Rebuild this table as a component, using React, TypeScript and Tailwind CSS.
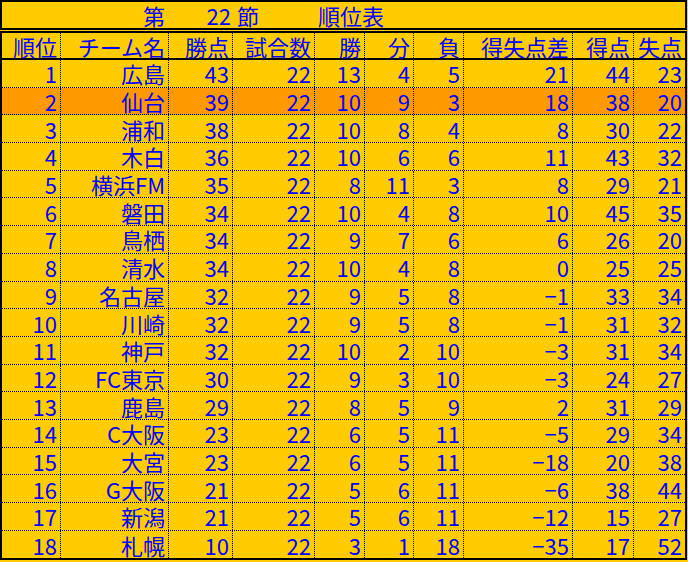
import React from "react";

const W = [
  "w-[59px]",
  "w-[108px]",
  "w-[64px]",
  "w-[82px]",
  "w-[50px]",
  "w-[49px]",
  "w-[50px]",
  "w-[109px]",
  "w-[61px]",
  "w-[51px]",
];

const header = ["順位", "チーム名", "勝点", "試合数", "勝", "分", "負", "得失点差", "得点", "失点"];

const rows: (string | number)[][] = [
  [1, "広島", 43, 22, 13, 4, 5, "21", 44, 23],
  [2, "仙台", 39, 22, 10, 9, 3, "18", 38, 20],
  [3, "浦和", 38, 22, 10, 8, 4, "8", 30, 22],
  [4, "木白", 36, 22, 10, 6, 6, "11", 43, 32],
  [5, "横浜FM", 35, 22, 8, 11, 3, "8", 29, 21],
  [6, "磐田", 34, 22, 10, 4, 8, "10", 45, 35],
  [7, "鳥栖", 34, 22, 9, 7, 6, "6", 26, 20],
  [8, "清水", 34, 22, 10, 4, 8, "0", 25, 25],
  [9, "名古屋", 32, 22, 9, 5, 8, "−1", 33, 34],
  [10, "川崎", 32, 22, 9, 5, 8, "−1", 31, 32],
  [11, "神戸", 32, 22, 10, 2, 10, "−3", 31, 34],
  [12, "FC東京", 30, 22, 9, 3, 10, "−3", 24, 27],
  [13, "鹿島", 29, 22, 8, 5, 9, "2", 31, 29],
  [14, "C大阪", 23, 22, 6, 5, 11, "−5", 29, 34],
  [15, "大宮", 23, 22, 6, 5, 11, "−18", 20, 38],
  [16, "G大阪", 21, 22, 5, 6, 11, "−6", 38, 44],
  [17, "新潟", 21, 22, 5, 6, 11, "−12", 15, 27],
  [18, "札幌", 10, 22, 3, 1, 18, "−35", 17, 52],
];

function Cell({ i, children, last }: { i: number; children: React.ReactNode; last: boolean }) {
  return (
    <div
      className={`${W[i]} h-full flex items-center justify-end pr-[3px] whitespace-nowrap ${
        last ? "" : "border-r border-dotted border-black"
      }`}
    >
      {children}
    </div>
  );
}

export default function App() {
  return (
    <div
      className="w-[688px] h-[562px] bg-[#FFCC00] text-[#0000FF] text-[22px] leading-none overflow-hidden"
      style={{ fontFamily: '"Noto Sans CJK JP", "Noto Sans", sans-serif' }}
    >
      {/* title */}
      <div className="w-[687px] h-[30px] border-2 border-black flex">
        <div className={`${W[0]}`} />
        <div className={`${W[1]} flex items-center justify-end pr-[4px]`}>第</div>
        <div className={`${W[2]} flex items-center justify-end pr-[2px]`}>22</div>
        <div className={`${W[3]} flex items-center pl-[4px]`}>節</div>
        <div className="flex items-center pl-[3px]">順位表</div>
      </div>
      <div className="h-[1px]" />
      {/* table */}
      <div className="w-[687px] border-2 border-black">
        <div className="h-[27px] flex border-b-2 border-black">
          {header.map((h, i) => (
            <Cell key={i} i={i} last={i === header.length - 1}>
              {h}
            </Cell>
          ))}
        </div>
        {rows.map((r, ri) => (
          <div
            key={ri}
            className={`h-[27.7px] flex ${ri === 1 ? "bg-[#FF9900]" : ""} ${
              ri === rows.length - 1 ? "" : "border-b border-dotted border-black"
            }`}
          >
            {r.map((v, i) => (
              <Cell key={i} i={i} last={i === r.length - 1}>
                {v}
              </Cell>
            ))}
          </div>
        ))}
      </div>
    </div>
  );
}
